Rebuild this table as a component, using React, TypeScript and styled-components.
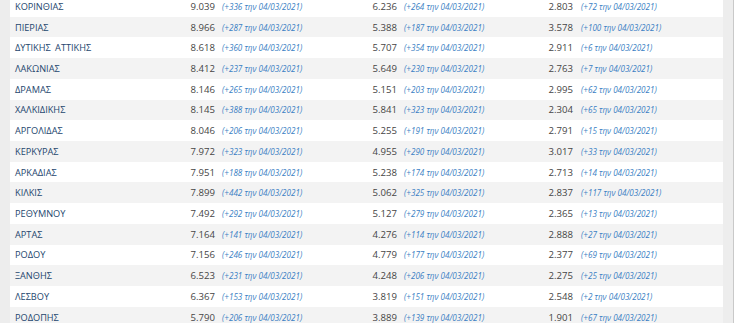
import * as React from 'react';
import styled, { createGlobalStyle } from 'styled-components';

const GlobalStyle = createGlobalStyle`
	html, body {
		margin: 0;
		padding: 0;
		background: #ededed;
		overflow: hidden;
	}
	body {
		font-family: 'Open Sans', 'Noto Sans', sans-serif;
	}
`;

type Region = {
	name: string;
	values: [string, string][];
};

const DATE = '04/03/2021';

const regions: Region[] = [
	{ name: 'ΚΟΡΙΝΘΙΑΣ', values: [['9.039', '336'], ['6.236', '264'], ['2.803', '72']] },
	{ name: 'ΠΙΕΡΙΑΣ', values: [['8.966', '287'], ['5.388', '187'], ['3.578', '100']] },
	{ name: 'ΔΥΤΙΚΗΣ ΑΤΤΙΚΗΣ', values: [['8.618', '360'], ['5.707', '354'], ['2.911', '6']] },
	{ name: 'ΛΑΚΩΝΙΑΣ', values: [['8.412', '237'], ['5.649', '230'], ['2.763', '7']] },
	{ name: 'ΔΡΑΜΑΣ', values: [['8.146', '265'], ['5.151', '203'], ['2.995', '62']] },
	{ name: 'ΧΑΛΚΙΔΙΚΗΣ', values: [['8.145', '388'], ['5.841', '323'], ['2.304', '65']] },
	{ name: 'ΑΡΓΟΛΙΔΑΣ', values: [['8.046', '206'], ['5.255', '191'], ['2.791', '15']] },
	{ name: 'ΚΕΡΚΥΡΑΣ', values: [['7.972', '323'], ['4.955', '290'], ['3.017', '33']] },
	{ name: 'ΑΡΚΑΔΙΑΣ', values: [['7.951', '188'], ['5.238', '174'], ['2.713', '14']] },
	{ name: 'ΚΙΛΚΙΣ', values: [['7.899', '442'], ['5.062', '325'], ['2.837', '117']] },
	{ name: 'ΡΕΘΥΜΝΟΥ', values: [['7.492', '292'], ['5.127', '279'], ['2.365', '13']] },
	{ name: 'ΑΡΤΑΣ', values: [['7.164', '141'], ['4.276', '114'], ['2.888', '27']] },
	{ name: 'ΡΟΔΟΥ', values: [['7.156', '246'], ['4.779', '177'], ['2.377', '69']] },
	{ name: 'ΞΑΝΘΗΣ', values: [['6.523', '231'], ['4.248', '206'], ['2.275', '25']] },
	{ name: 'ΛΕΣΒΟΥ', values: [['6.367', '153'], ['3.819', '151'], ['2.548', '2']] },
	{ name: 'ΡΟΔΟΠΗΣ', values: [['5.790', '206'], ['3.889', '139'], ['1.901', '67']] },
];

const Frame = styled.div`
	height: 323px;
	overflow: hidden;
	padding: 0 10px;
	border-right: 1px solid #c9c9c9;
	box-sizing: border-box;
	background: #ededed;
`;

const Table = styled.div`
	width: 713px;
	margin-top: -4px;
`;

const Row = styled.div<{ $striped: boolean }>`
	display: grid;
	grid-template-columns: 150px 55px 135px 47px 123px 53px 1fr;
	align-items: center;
	height: 20.73px;
	background: ${(p) => (p.$striped ? '#f3f3f3' : '#ffffff')};
`;

const Name = styled.div`
	padding-left: 5px;
	font-size: 9.2px;
	word-spacing: 2px;
	color: #24466e;
	white-space: nowrap;
`;

const Value = styled.div`
	text-align: right;
	font-size: 9.6px;
	color: #454545;
`;

const Change = styled.div<{ $pad: number }>`
	padding-left: ${(p) => p.$pad}px;
	font-size: 8.1px;
	font-style: italic;
	color: #3b7fc4;
	white-space: nowrap;
`;

const pads = [7, 7, 8];

export default function App() {
	return (
		<>
			<GlobalStyle />
			<Frame>
				<Table>
					{regions.map((r, i) => (
						<Row key={r.name} $striped={i % 2 === 1}>
							<Name>{r.name}</Name>
							{r.values.map(([total, added], j) => (
								<React.Fragment key={j}>
									<Value>{total}</Value>
									<Change $pad={pads[j]}>
										(+{added} την {DATE})
									</Change>
								</React.Fragment>
							))}
						</Row>
					))}
				</Table>
			</Frame>
		</>
	);
}
